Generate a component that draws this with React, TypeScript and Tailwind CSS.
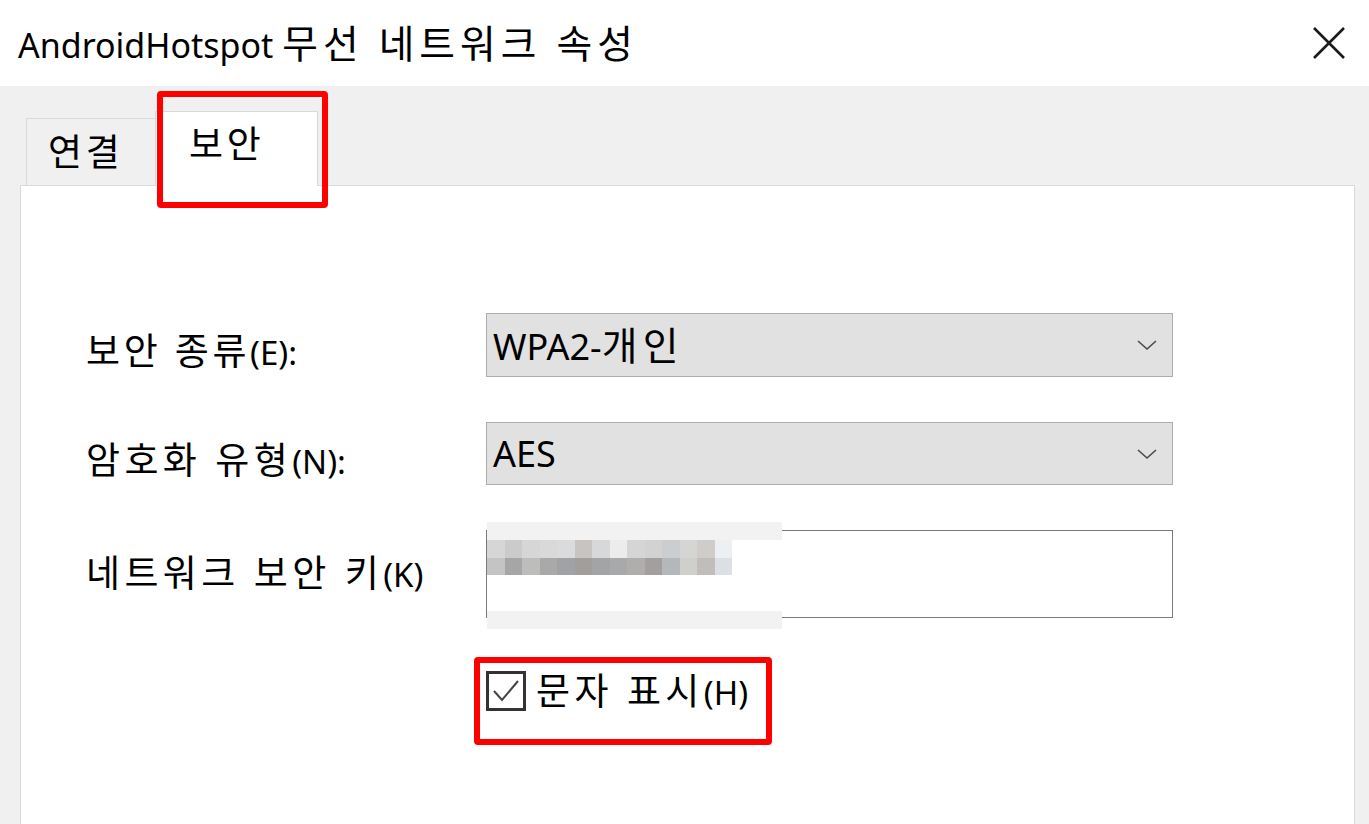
import React from "react";

const FONT = { fontFamily: '"Noto Sans", "Noto Sans CJK KR", sans-serif' };

// Hangul runs are drawn a little larger and wider so they sit like Malgun Gothic next to Latin text
const K: React.FC<{ children: string; cls?: string }> = ({ children, cls = "text-[1.12em] tracking-[0.1em]" }) => {
  const parts = children.split(/([\uac00-\ud7a3](?:[\uac00-\ud7a3 ]*[\uac00-\ud7a3])?)/);
  return (
    <>
      {parts.map((p, i) =>
        /[\uac00-\ud7a3]/.test(p) ? (
          <span key={i} className={cls}>
            {p}
          </span>
        ) : (
          <span key={i}>{p}</span>
        )
      )}
    </>
  );
};

const mosaicTop = [
  "#d7d6d6", "#cbcbcb", "#d6d6d6", "#d9d9da", "#dadbdc", "#c8c4c2", "#d7d8d9",
  "#ececec", "#d5d5d5", "#d2d2d2", "#cbced1", "#d5d5d3", "#d0ccca", "#edf0f3",
];
const mosaicBottom = [
  "#c5c4c4", "#a6a6a6", "#bdbdbb", "#a9a9a9", "#a1a2a5", "#a29e9c", "#a3a4a6",
  "#a8a9ab", "#b0aeac", "#a29f9e", "#b5b8bb", "#cfcfcc", "#c0bdba", "#dcdfe3",
];

const Chevron: React.FC = () => (
  <svg width="22" height="12" viewBox="0 0 22 12" fill="none">
    <polyline points="2,2 11,10 20,2" stroke="#4a4a4a" strokeWidth="1.6" />
  </svg>
);

const SelectBox: React.FC<{ value: string; height: string }> = ({ value, height }) => (
  <div
    className={`flex items-center justify-between w-[687px] ${height} bg-[#e1e1e1] border border-[#adadad] pl-[6px] pr-[14px]`}
  >
    <span className="text-[36px] text-black leading-none whitespace-nowrap">
      <K cls="text-[1.08em] tracking-[0.14em]">{value}</K>
    </span>
    <Chevron />
  </div>
);

const App: React.FC = () => {
  return (
    <div className="w-[1369px] h-[824px] bg-[#f0f0f0] overflow-hidden flex flex-col" style={FONT}>
      {/* title bar */}
      <div className="h-[86px] bg-white flex items-center justify-between pl-[18px] pr-[22px] shrink-0">
        <span className="text-[34px] text-black leading-none whitespace-nowrap">
          <K cls="text-[1.14em] tracking-[0.13em]">AndroidHotspot 무선 네트워크 속성</K>
        </span>
        <svg width="36" height="36" viewBox="0 0 36 36" fill="none">
          <path d="M3 3 L33 33 M33 3 L3 33" stroke="#1a1a1a" strokeWidth="2.6" />
        </svg>
      </div>

      {/* tabs */}
      <div className="relative h-[99px] shrink-0 flex items-end pl-[26px]">
        <div className="w-[131px] h-[67px] border-t border-l border-[#d9d9d9] flex items-center pl-[21px]">
          <span className="text-[33px] text-black leading-none">
            <K>연결</K>
          </span>
        </div>
        <div className="relative z-10 -mb-px w-[163px] h-[75px] bg-white border-t border-l border-r border-[#d9d9d9] flex items-start pt-[14px] pl-[33px] -ml-[2px]">
          <span className="text-[33px] text-black leading-none">
            <K>보안</K>
          </span>
        </div>
        <div className="absolute z-20 left-[157px] top-[5px] w-[171px] h-[117px] border-[6px] border-[#ff0000] rounded-[4px]" />
      </div>

      {/* panel */}
      <div className="flex-1 ml-[20px] mr-[14px] bg-white border border-[#d9d9d9] border-b-0 pl-[65px] pt-[127px] flex flex-col">
        <div className="flex items-start">
          <div className="w-[400px] pt-[20px] text-[33px] text-black leading-none whitespace-nowrap">
            <K>보안 종류(E):</K>
          </div>
          <SelectBox value="WPA2-개인" height="h-[64px]" />
        </div>

        <div className="flex items-start mt-[45px]">
          <div className="w-[400px] pt-[20px] text-[33px] text-black leading-none whitespace-nowrap">
            <K cls="text-[1.12em] tracking-[0.12em]">암호화 유형(N):</K>
          </div>
          <SelectBox value="AES" height="h-[63px]" />
        </div>

        <div className="flex items-start mt-[45px]">
          <div className="w-[400px] pt-[25px] text-[33px] text-black leading-none whitespace-nowrap">
            <K cls="text-[1.12em] tracking-[0.12em]">네트워크 보안 키(K)</K>
          </div>
          <div className="relative w-[687px] h-[88px] bg-white border border-[#7a7a7a]">
            {/* pixelated key */}
            <div className="absolute left-0 -top-[9px] w-[295px] h-[107px] flex flex-col">
              <div className="h-[18px] bg-[#f2f2f2]" />
              <div className="flex">
                {mosaicTop.map((c, i) => (
                  <div key={i} className="w-[17.5px] h-[17.5px]" style={{ backgroundColor: c }} />
                ))}
              </div>
              <div className="flex">
                {mosaicBottom.map((c, i) => (
                  <div key={i} className="w-[17.5px] h-[17.5px]" style={{ backgroundColor: c }} />
                ))}
              </div>
              <div className="flex-1 bg-white" />
              <div className="h-[18px] bg-[#f2f2f2]" />
            </div>
          </div>
        </div>

        <div className="ml-[400px] mt-[53px] relative w-fit">
          <div className="flex items-center gap-[10px]">
            <div className="w-[40px] h-[40px] border-[3px] border-[#333333] bg-white flex items-center justify-center">
              <svg width="30" height="26" viewBox="0 0 30 26" fill="none">
                <polyline points="3,13 11,22 27,3" stroke="#444444" strokeWidth="2" />
              </svg>
            </div>
            <span className="text-[33px] text-black leading-none whitespace-nowrap">
              <K cls="text-[1.12em] tracking-[0.12em]">문자 표시(H)</K>
            </span>
          </div>
          <div className="absolute -left-[12px] -top-[14px] w-[298px] h-[88px] border-[6px] border-[#ff0000] rounded-[4px]" />
        </div>
      </div>
    </div>
  );
};

export default App;
